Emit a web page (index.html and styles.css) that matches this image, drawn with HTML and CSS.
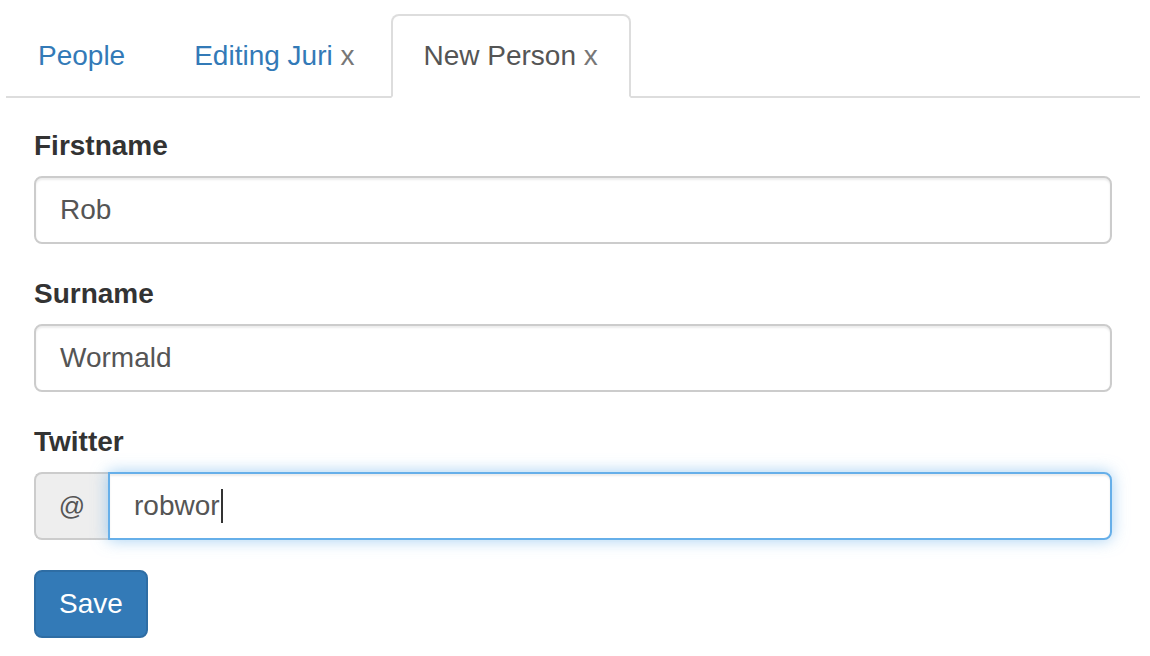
FILE: index.html
```html
<!DOCTYPE html>
<html lang="en">
<head>
<meta charset="utf-8">
<title>New Person</title>
<link rel="stylesheet" href="styles.css">
</head>
<body>
<div class="page">
  <ul class="nav-tabs">
    <li class="tab"><a href="#">People</a></li>
    <li class="tab"><a href="#">Editing Juri <span class="close">x</span></a></li>
    <li class="tab active"><a href="#">New Person <span class="close">x</span></a></li>
  </ul>
  <form class="form">
    <div class="form-group">
      <label class="label">Firstname</label>
      <div class="form-control">Rob</div>
    </div>
    <div class="form-group">
      <label class="label">Surname</label>
      <div class="form-control">Wormald</div>
    </div>
    <div class="form-group">
      <label class="label">Twitter</label>
      <div class="input-group">
        <span class="addon">@</span>
        <div class="form-control focused">robwor<span class="caret"></span></div>
      </div>
    </div>
    <button type="button" class="btn">Save</button>
  </form>
</div>
</body>
</html>
```
FILE: styles.css
```css
* { box-sizing: border-box; }
html, body { margin: 0; background: #fff; }
body {
  font-family: "Liberation Sans", Arial, sans-serif;
  font-size: 28px;
  line-height: 40px;
  color: #333;
}
.page { padding: 14px 10px 0 6px; }
.nav-tabs {
  list-style: none;
  margin: 0;
  padding: 0;
  display: flex;
  border-bottom: 2px solid #ddd;
}
.tab { margin-right: 4px; margin-bottom: -2px; }
.tab a {
  display: block;
  padding: 20px 31px 20px 30px;
  line-height: 40px;
  border: 2px solid transparent;
  border-radius: 8px 8px 0 0;
  color: #337ab7;
  text-decoration: none;
}
.tab.active a {
  color: #555;
  background: #fff;
  border-color: #ddd #ddd transparent #ddd;
}
.close { color: #777; }
.form { padding: 28px 28px 0 28px; }
.form-group { margin-bottom: 30px; }
.label {
  display: block;
  font-weight: bold;
  margin-bottom: 10px;
}
.form-control {
  height: 68px;
  padding: 12px 24px;
  border: 2px solid #ccc;
  border-radius: 8px;
  color: #555;
  background: #fff;
  box-shadow: inset 0 2px 2px rgba(0,0,0,.075);
  display: flex;
  align-items: center;
  width: 100%;
}
.input-group { display: flex; }
.addon {
  flex: none;
  width: 74px;
  height: 68px;
  display: flex;
  align-items: center;
  justify-content: center;
  background: #eee;
  border: 2px solid #ccc;
  border-right: 0;
  border-radius: 8px 0 0 8px;
  color: #555;
  font-size: 26px;
}
.input-group .form-control {
  border-radius: 0 8px 8px 0;
  flex: 1;
}
.form-control.focused {
  border-color: #66afe9;
  box-shadow: inset 0 2px 2px rgba(0,0,0,.075), 0 0 16px rgba(102,175,233,.6);
}
.caret {
  display: inline-block;
  width: 2px;
  height: 34px;
  background: #333;
  margin-left: 1px;
}
.btn {
  font-family: inherit;
  font-size: 28px;
  line-height: 40px;
  padding: 12px 23px;
  color: #fff;
  background: #337ab7;
  border: 2px solid #2e6da4;
  border-radius: 8px;
}
```
